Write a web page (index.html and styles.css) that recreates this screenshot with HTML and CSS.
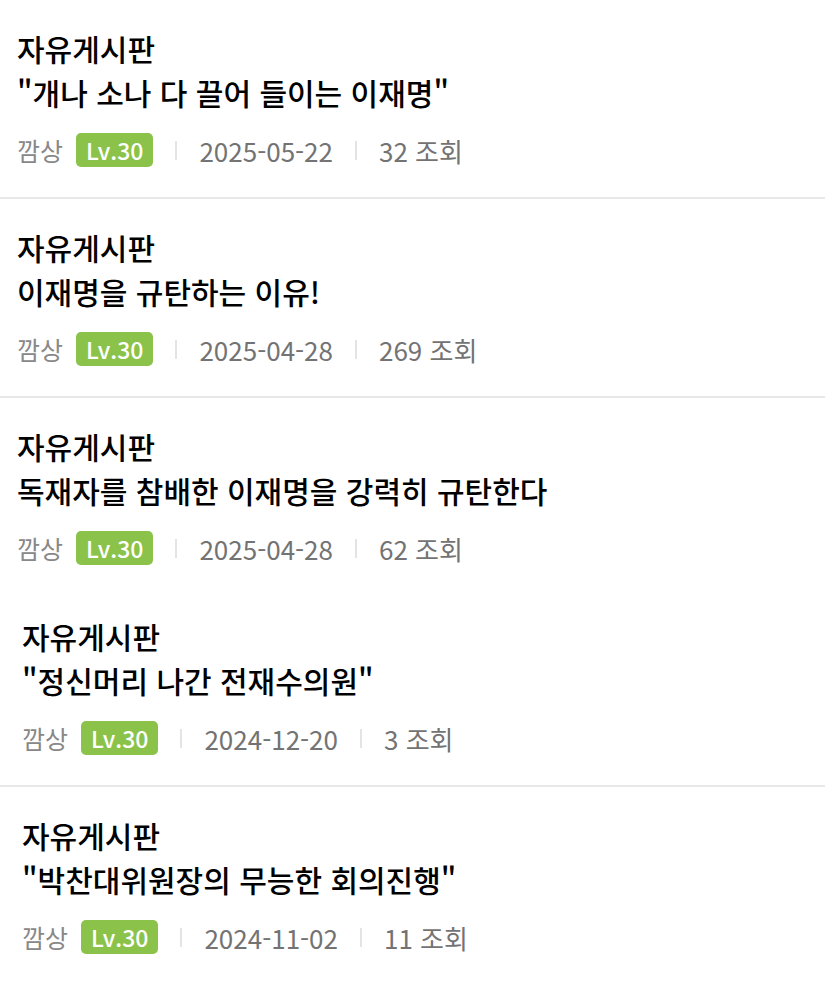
FILE: index.html
```html
<!DOCTYPE html>
<html lang="ko">
<head>
  <meta charset="UTF-8">
  <meta name="viewport" content="width=device-width, initial-scale=1.0">
  <title>작성글 목록</title>
  <link rel="stylesheet" href="styles.css">
</head>
<body>
  <ul class="post-list">
    <li class="post">
      <div class="board">자유게시판</div>
      <div class="subject">"개나 소나 다 끌어 들이는 이재명"</div>
      <div class="meta">
        <span class="nick">깜상</span>
        <span class="level">Lv.30</span>
        <span class="sep"></span>
        <span class="date">2025-05-22</span>
        <span class="sep"></span>
        <span class="views">32 조회</span>
      </div>
    </li>
    <li class="post">
      <div class="board">자유게시판</div>
      <div class="subject">이재명을 규탄하는 이유!</div>
      <div class="meta">
        <span class="nick">깜상</span>
        <span class="level">Lv.30</span>
        <span class="sep"></span>
        <span class="date">2025-04-28</span>
        <span class="sep"></span>
        <span class="views">269 조회</span>
      </div>
    </li>
    <li class="post">
      <div class="board">자유게시판</div>
      <div class="subject">독재자를 참배한 이재명을 강력히 규탄한다</div>
      <div class="meta">
        <span class="nick">깜상</span>
        <span class="level">Lv.30</span>
        <span class="sep"></span>
        <span class="date">2025-04-28</span>
        <span class="sep"></span>
        <span class="views">62 조회</span>
      </div>
    </li>
  </ul>

  <ul class="post-list older">
    <li class="post">
      <div class="board">자유게시판</div>
      <div class="subject">"정신머리 나간 전재수의원"</div>
      <div class="meta">
        <span class="nick">깜상</span>
        <span class="level">Lv.30</span>
        <span class="sep"></span>
        <span class="date">2024-12-20</span>
        <span class="sep"></span>
        <span class="views">3 조회</span>
      </div>
    </li>
    <li class="post">
      <div class="board">자유게시판</div>
      <div class="subject">"박찬대위원장의 무능한 회의진행"</div>
      <div class="meta">
        <span class="nick">깜상</span>
        <span class="level">Lv.30</span>
        <span class="sep"></span>
        <span class="date">2024-11-02</span>
        <span class="sep"></span>
        <span class="views">11 조회</span>
      </div>
    </li>
  </ul>
</body>
</html>
```

FILE: styles.css
```css
body {
  margin: 0;
  background-color: #fff;
  font-family: "Noto Sans CJK KR", "Noto Sans", sans-serif;
  color: #000;
}

.post-list {
  list-style: none;
  margin: 0;
  padding: 0;
}

.post {
  padding: 26px 17px 30px;
  border-bottom: 2px solid #e8e8e8;
}

.post-list:first-child .post:last-child {
  border-bottom: none;
  padding-bottom: 23px;
}

.older .post {
  padding-left: 22px;
}

.older .post:last-child {
  border-bottom: none;
}

.board, .subject {
  font-size: 30px;
  font-weight: 500;
  line-height: 44px;
  white-space: nowrap;
}

.meta {
  display: flex;
  align-items: center;
  margin-top: 19px;
  height: 34px;
  font-size: 26px;
  color: #737373;
}

.nick {
  color: #888;
  font-size: 25px;
}

.level {
  margin-left: 13px;
  padding: 0 10px;
  height: 34px;
  line-height: 34px;
  border-radius: 5px;
  background-color: #8bc34a;
  color: #fff;
  font-size: 23px;
  font-weight: 500;
}

.sep {
  width: 2px;
  height: 19px;
  margin: 0 22px;
  background-color: #e4e4e4;
}
```
